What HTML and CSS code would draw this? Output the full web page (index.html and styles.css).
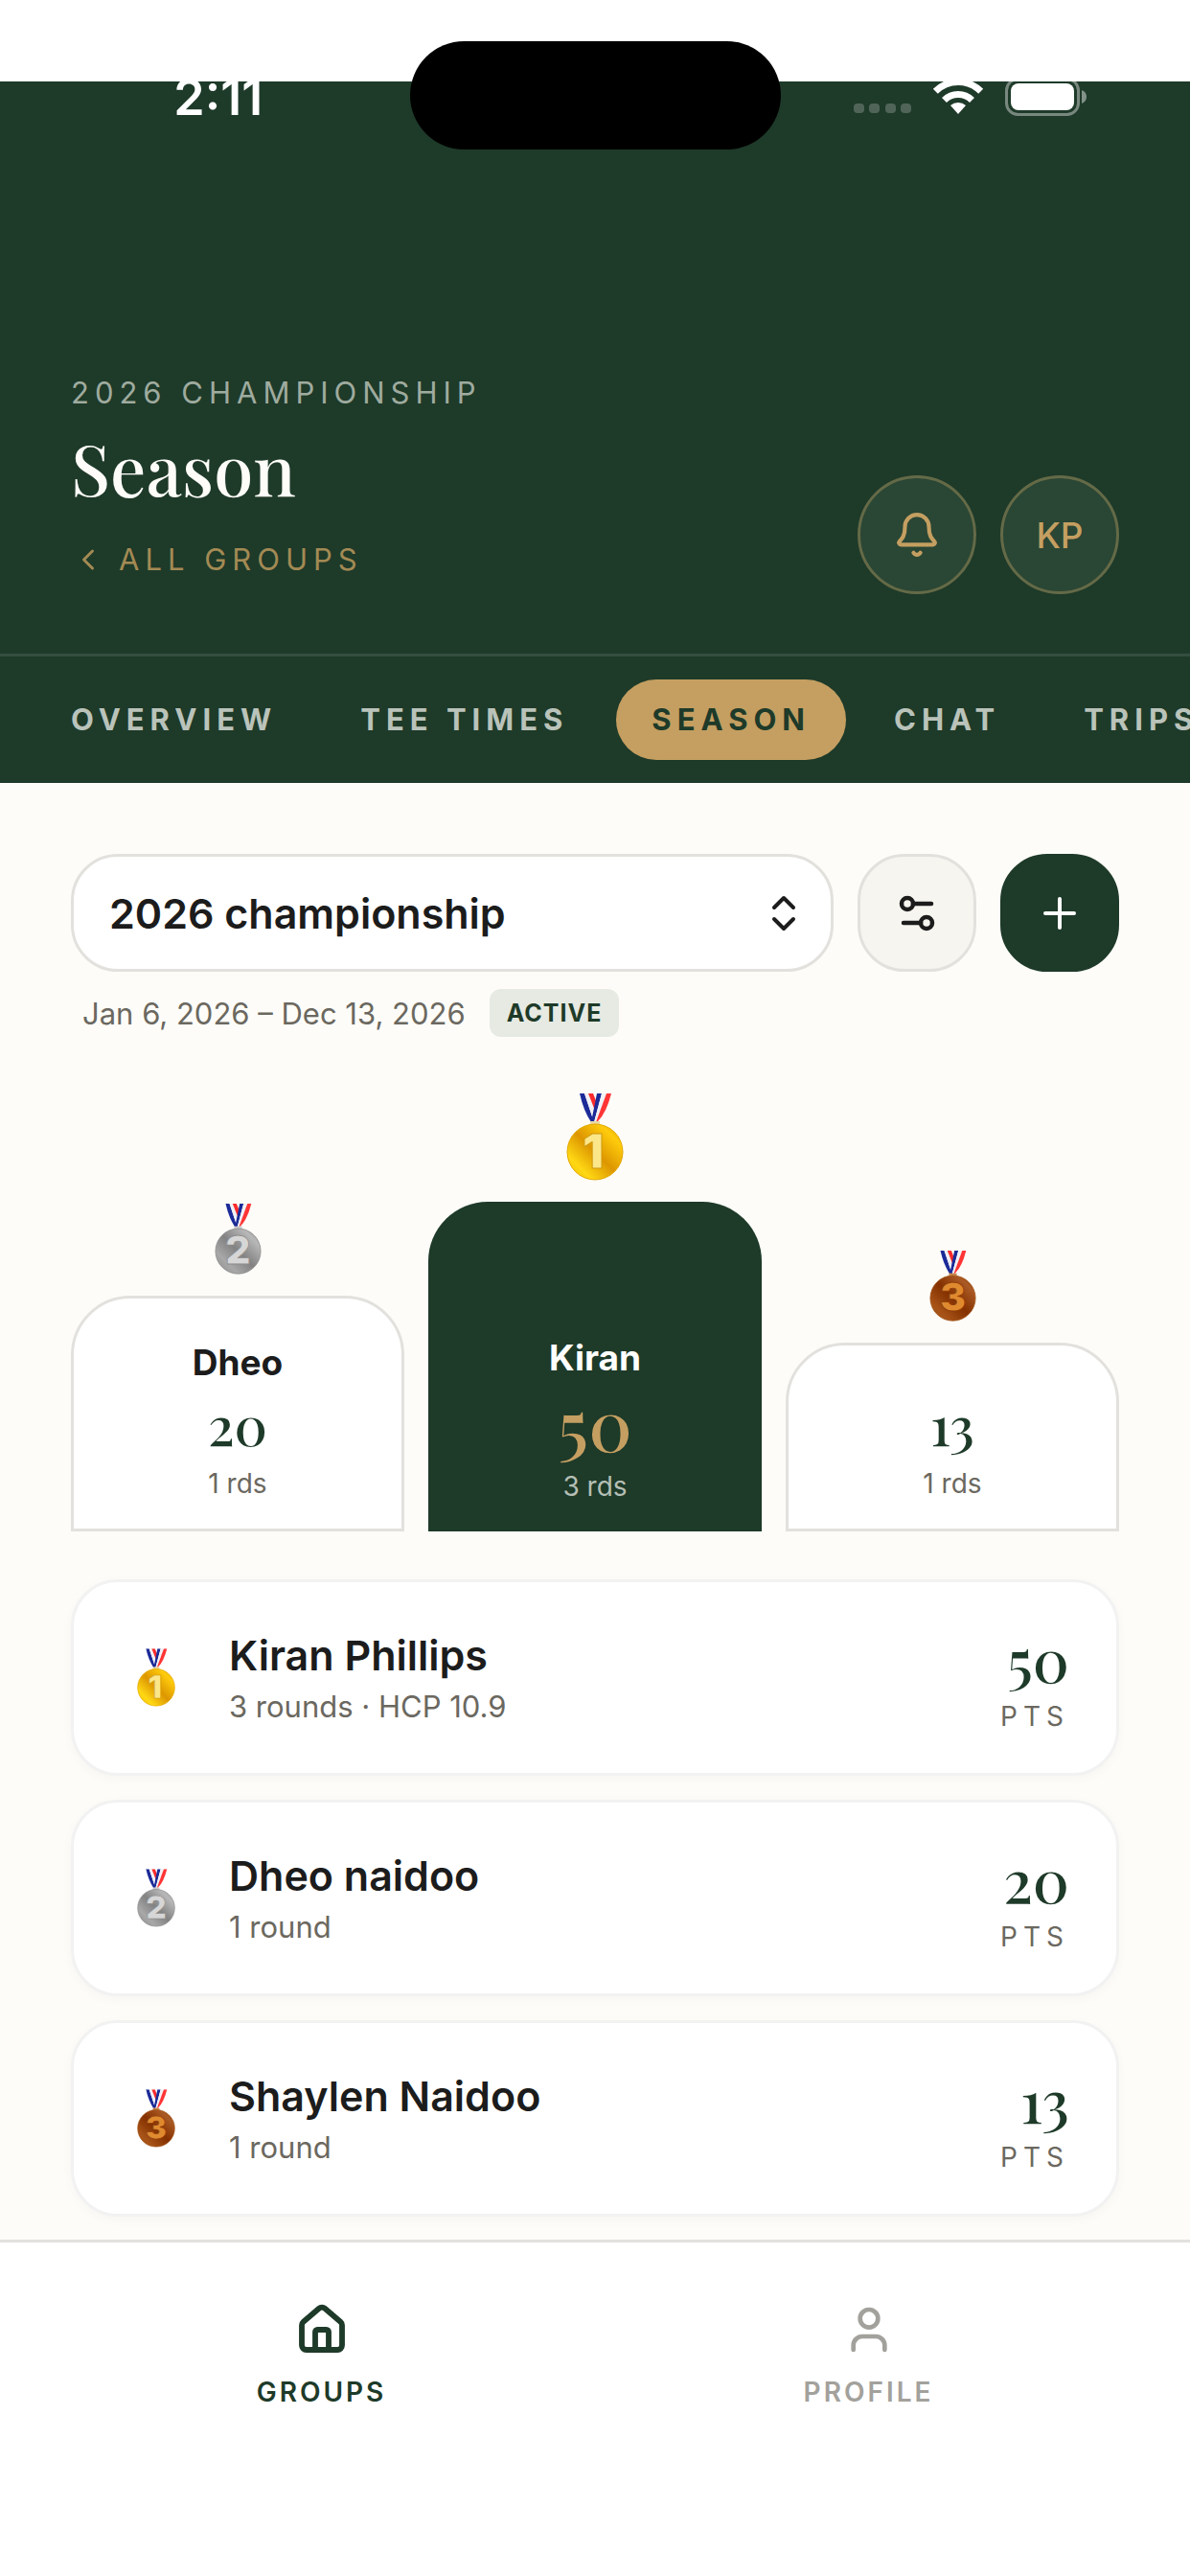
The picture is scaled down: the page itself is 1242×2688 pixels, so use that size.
FILE: index.html
```
<!DOCTYPE html>
<html lang="en">
<head>
    <meta charset="UTF-8">
    <meta name="viewport" content="width=device-width, initial-scale=1.0">
    <title>Season</title>
    <link rel="stylesheet" href="styles.css">
</head>
<body>
    <!-- shared medal artwork -->
    <svg class="sprite" width="0" height="0" aria-hidden="true">
        <defs>
            <linearGradient id="gold" x1="0" y1="1" x2="1" y2="0">
                <stop offset="0" stop-color="#f0b800"/>
                <stop offset="0.22" stop-color="#ffd814"/>
                <stop offset="0.5" stop-color="#dd9600"/>
                <stop offset="0.8" stop-color="#ffcc0c"/>
                <stop offset="1" stop-color="#d99400"/>
            </linearGradient>
            <linearGradient id="silver" x1="0" y1="1" x2="1" y2="0">
                <stop offset="0" stop-color="#8a8a8a"/>
                <stop offset="0.25" stop-color="#a8a8a8"/>
                <stop offset="0.5" stop-color="#828282"/>
                <stop offset="0.8" stop-color="#b8b8b8"/>
                <stop offset="1" stop-color="#8c8c8c"/>
            </linearGradient>
            <linearGradient id="bronze" x1="0" y1="1" x2="1" y2="0">
                <stop offset="0" stop-color="#9a4a10"/>
                <stop offset="0.2" stop-color="#a85418"/>
                <stop offset="0.5" stop-color="#843000"/>
                <stop offset="0.8" stop-color="#aa5a24"/>
                <stop offset="1" stop-color="#8c3a06"/>
            </linearGradient>
        </defs>
        <symbol id="ribbon" viewBox="0 0 60 91">
            <path d="M14 0h5l10 30h-3Q18 18 14 0z" fill="#1c2b98"/>
            <path d="M19 0h4l8 24-2 6z" fill="#f1f1f6"/>
            <path d="M23 0h5l4 10-2 8z" fill="#fb2b2b"/>
            <path d="M32 0h5l-8 30h-3z" fill="#1c2b98"/>
            <path d="M37 0h5l-9 27-4 3z" fill="#f1f1f6"/>
            <path d="M42 0h5Q42 20 33 29l-2 1z" fill="#ff3535"/>
        </symbol>
        <symbol id="medal-gold" viewBox="0 0 60 91">
            <use href="#ribbon"/>
            <rect x="25" y="29" width="10" height="4" fill="#e9d9a0"/>
            <circle cx="30" cy="61" r="29" fill="url(#gold)" stroke="#e3a800"/>
        </symbol>
        <symbol id="medal-silver" viewBox="0 0 60 91">
            <use href="#ribbon"/>
            <rect x="25" y="29" width="10" height="4" fill="#c9c9c9"/>
            <circle cx="30" cy="61" r="29" fill="url(#silver)" stroke="#8e8e8e"/>
        </symbol>
        <symbol id="medal-bronze" viewBox="0 0 60 91">
            <use href="#ribbon"/>
            <rect x="25" y="29" width="10" height="4" fill="#c98a50"/>
            <circle cx="30" cy="61" r="29" fill="url(#bronze)" stroke="#a4561b"/>
        </symbol>
    </svg>

    <div class="status-bar">
        <span class="status-time">2:11</span>
        <span class="island"></span>
        <span class="status-icons">
            <svg width="60" height="38" viewBox="0 0 60 38" fill="#fff" opacity="0.22">
                <rect x="0" y="26" width="11" height="10" rx="4"/>
                <rect x="16" y="26" width="11" height="10" rx="4"/>
                <rect x="33" y="26" width="11" height="10" rx="4"/>
                <rect x="49" y="26" width="11" height="10" rx="4"/>
            </svg>
            <svg width="54" height="38" viewBox="0 0 54 38" fill="none" stroke="#fff">
                <path d="M3.3 13.3a33.5 33.5 0 0 1 47.4 0" stroke-width="7"/>
                <path d="M12.5 22.5a20.5 20.5 0 0 1 29 0" stroke-width="7"/>
                <path d="M27 37l-8-9a12 12 0 0 1 16 0z" fill="#fff" stroke="none"/>
            </svg>
            <svg width="86" height="40" viewBox="0 0 86 40">
                <rect x="1.5" y="1.5" width="75" height="37" rx="12" fill="none" stroke="#fff" stroke-width="3" opacity="0.4"/>
                <rect x="6" y="6" width="66" height="28" rx="8" fill="#fff"/>
                <path d="M80 13q5 2 5 7t-5 7z" fill="#fff" opacity="0.45"/>
            </svg>
        </span>
    </div>

    <header class="header">
        <div class="header-title">
            <p class="eyebrow">2026 CHAMPIONSHIP</p>
            <h1>Season</h1>
            <a class="back-link" href="#">
                <svg class="icon" width="36" height="36" viewBox="0 0 24 24"><path d="m15 18-6-6 6-6"/></svg>
                ALL GROUPS
            </a>
        </div>
        <div class="header-actions">
            <button class="round-btn" aria-label="Notifications">
                <svg class="icon" width="50" height="50" viewBox="0 0 24 24">
                    <path d="M10.268 21a2 2 0 0 0 3.464 0"/>
                    <path d="M3.262 15.326A1 1 0 0 0 4 17h16a1 1 0 0 0 .74-1.673C19.41 13.956 18 12.499 18 8A6 6 0 0 0 6 8c0 4.499-1.411 5.956-2.738 7.326"/>
                </svg>
            </button>
            <button class="round-btn">KP</button>
        </div>
    </header>

    <nav class="tabs">
        <a class="tab" href="#">OVERVIEW</a>
        <a class="tab" href="#">TEE TIMES</a>
        <a class="tab active" href="#">SEASON</a>
        <a class="tab" href="#">CHAT</a>
        <a class="tab" href="#">TRIPS</a>
    </nav>

    <main class="content">
        <div class="controls">
            <div class="season-select">
                <select aria-label="Season">
                    <option>2026 championship</option>
                </select>
                <svg class="icon" width="48" height="48" viewBox="0 0 24 24"><path d="m7 15 5 5 5-5"/><path d="m7 9 5-5 5 5"/></svg>
            </div>
            <button class="square-btn" aria-label="Season settings">
                <svg width="38" height="38" viewBox="0 0 38 38" fill="none" stroke="currentColor" stroke-width="4.5" stroke-linecap="round">
                    <circle cx="9" cy="9" r="6"/>
                    <path d="M15 9h19"/>
                    <circle cx="29" cy="29" r="6"/>
                    <path d="M23 29H5"/>
                </svg>
            </button>
            <button class="square-btn primary" aria-label="Add">
                <svg width="34" height="34" viewBox="0 0 34 34" fill="none" stroke="currentColor" stroke-width="4" stroke-linecap="round"><path d="M17 2v30M2 17h30"/></svg>
            </button>
        </div>

        <div class="season-meta">
            <span>Jan 6, 2026 – Dec 13, 2026</span>
            <span class="badge">ACTIVE</span>
        </div>

        <section class="podium">
            <div class="place second">
                <svg class="medal silver" viewBox="0 0 60 91"><use href="#medal-silver"/><text x="30" y="78">2</text></svg>
                <div class="block">
                    <p class="block-name">Dheo</p>
                    <p class="block-score">20</p>
                    <p class="block-rounds">1 rds</p>
                </div>
            </div>
            <div class="place first">
                <svg class="medal gold" viewBox="0 0 60 91"><use href="#medal-gold"/><text x="28" y="78">1</text></svg>
                <div class="block">
                    <p class="block-name">Kiran</p>
                    <p class="block-score">50</p>
                    <p class="block-rounds">3 rds</p>
                </div>
            </div>
            <div class="place third">
                <svg class="medal bronze" viewBox="0 0 60 91"><use href="#medal-bronze"/><text x="30" y="78">3</text></svg>
                <div class="block">
                    <p class="block-score">13</p>
                    <p class="block-rounds">1 rds</p>
                </div>
            </div>
        </section>

        <ol class="leaderboard">
            <li class="player">
                <svg class="medal gold" viewBox="0 0 60 91"><use href="#medal-gold"/><text x="28" y="78">1</text></svg>
                <div class="player-info">
                    <h2>Kiran Phillips</h2>
                    <p>3 rounds · HCP 10.9</p>
                </div>
                <div class="points">
                    <strong>50</strong>
                    <span>PTS</span>
                </div>
            </li>
            <li class="player">
                <svg class="medal silver" viewBox="0 0 60 91"><use href="#medal-silver"/><text x="30" y="78">2</text></svg>
                <div class="player-info">
                    <h2>Dheo naidoo</h2>
                    <p>1 round</p>
                </div>
                <div class="points">
                    <strong>20</strong>
                    <span>PTS</span>
                </div>
            </li>
            <li class="player">
                <svg class="medal bronze" viewBox="0 0 60 91"><use href="#medal-bronze"/><text x="30" y="78">3</text></svg>
                <div class="player-info">
                    <h2>Shaylen Naidoo</h2>
                    <p>1 round</p>
                </div>
                <div class="points">
                    <strong>13</strong>
                    <span>PTS</span>
                </div>
            </li>
        </ol>
    </main>

    <nav class="bottom-nav">
        <a class="nav-item active" href="#">
            <svg class="icon" width="56" height="56" viewBox="0 0 24 24">
                <path d="M15 21v-8a1 1 0 0 0-1-1h-4a1 1 0 0 0-1 1v8"/>
                <path d="M3 10a2 2 0 0 1 .709-1.528l7-5.999a2 2 0 0 1 2.582 0l7 5.999A2 2 0 0 1 21 10v9a2 2 0 0 1-2 2H5a2 2 0 0 1-2-2z"/>
            </svg>
            GROUPS
        </a>
        <a class="nav-item" href="#">
            <svg class="icon" width="56" height="56" viewBox="0 0 24 24">
                <path d="M19 21v-2a4 4 0 0 0-4-4H9a4 4 0 0 0-4 4v2"/>
                <circle cx="12" cy="7" r="4"/>
            </svg>
            PROFILE
        </a>
    </nav>
</body>
</html>
```

FILE: styles.css
```
:root {
    --green: #1e3a29;
    --gold: #c49f61;
    --cream: #fdfcf8;
    --ink: #1c1c1c;
    --muted: #6b6860;
    --line: #e2e1dd;
    --serif: "Playfair Display", "Liberation Serif", serif;
}
* {
    box-sizing: border-box;
}
body {
    font-family: Inter, sans-serif;
    background-color: white;
    color: var(--ink);
    margin: 0;
    min-height: 100vh;
    display: flex;
    flex-direction: column;
    overflow-x: hidden;
}
h1, h2, p, ol {
    margin: 0;
    padding: 0;
}
a {
    text-decoration: none;
}
button, select {
    font-family: inherit;
    cursor: pointer;
}
svg {
    flex-shrink: 0;
}
.sprite {
    position: absolute;
}
.icon {
    fill: none;
    stroke: currentColor;
    stroke-width: 2;
    stroke-linecap: round;
    stroke-linejoin: round;
}

/* medals */
.medal text {
    font-size: 50px;
    font-weight: 900;
    text-anchor: middle;
}
.gold text {
    fill: #fbe689;
    stroke: #cf9a10;
}
.silver text {
    fill: #d6d6d6;
    stroke: #8d8d8d;
}
.bronze text {
    fill: #e08a30;
    stroke: #8e3d08;
}

/* status bar */
.status-bar {
    display: grid;
    grid-template-columns: 1fr 387px 1fr;
    align-items: center;
    justify-items: center;
    padding-top: 43px;
    color: white;
    background: linear-gradient(white 85px, var(--green) 85px);
}
.status-time {
    font-size: 52px;
    font-weight: 600;
    padding: 3px 0 0 28px;
}
.island {
    width: 100%;
    height: 113px;
    border-radius: 57px;
    background-color: black;
}
.status-icons {
    display: flex;
    align-items: center;
    gap: 22px;
    padding: 3px 30px 0 0;
}

/* header */
.header {
    display: flex;
    justify-content: space-between;
    align-items: flex-end;
    padding: 234px 74px 62px;
    background-color: var(--green);
}
.eyebrow {
    font-size: 31px;
    line-height: 40px;
    letter-spacing: 6px;
    color: #9fab9f;
    margin-bottom: 8px;
}
.header h1 {
    font-family: var(--serif);
    font-size: 74px;
    line-height: 100px;
    font-weight: 500;
    color: var(--cream);
}
.back-link {
    display: flex;
    align-items: center;
    gap: 14px;
    padding: 26px 0 16px;
    font-size: 31px;
    line-height: 40px;
    letter-spacing: 6px;
    color: #a38a54;
}
.header-actions {
    display: flex;
    gap: 25px;
}
.round-btn {
    display: flex;
    align-items: center;
    justify-content: center;
    width: 124px;
    height: 124px;
    border: 3px solid #646a47;
    border-radius: 50%;
    background-color: #2a4634;
    color: var(--gold);
    font-size: 37px;
    font-weight: 500;
    padding: 0;
}

/* section tabs */
.tabs {
    display: flex;
    gap: 13px;
    padding: 24px 37px;
    border-top: 3px solid #354e3f;
    background-color: var(--green);
    overflow: hidden;
}
.tab {
    padding: 0 37px;
    border-radius: 42px;
    font-size: 31px;
    line-height: 84px;
    font-weight: 700;
    letter-spacing: 6px;
    white-space: nowrap;
    color: #bac3ba;
}
.tab.active {
    background-color: var(--gold);
    color: var(--green);
}

/* content */
.content {
    flex: 1;
    padding: 74px 74px 20px;
    background-color: var(--cream);
}
.controls {
    display: flex;
    gap: 25px;
}
.season-select {
    display: grid;
    flex: 1;
    align-items: center;
}
.season-select select {
    grid-area: 1 / 1;
    appearance: none;
    width: 100%;
    height: 123px;
    padding: 0 90px 0 37px;
    border: 3px solid var(--line);
    border-radius: 49px;
    background-color: white;
    color: var(--ink);
    font-size: 43px;
    font-weight: 600;
}
.season-select .icon {
    grid-area: 1 / 1;
    justify-self: end;
    margin-right: 28px;
    pointer-events: none;
}
.square-btn {
    display: flex;
    align-items: center;
    justify-content: center;
    width: 124px;
    height: 123px;
    padding: 0;
    border: 3px solid var(--line);
    border-radius: 49px;
    background-color: #f7f5ef;
    color: var(--ink);
}
.square-btn.primary {
    border-color: var(--green);
    background-color: var(--green);
    color: white;
}
.season-meta {
    display: flex;
    align-items: center;
    gap: 25px;
    margin-top: 18px;
    padding-left: 12px;
    font-size: 31px;
    color: var(--muted);
}
.badge {
    padding: 0 18px;
    border-radius: 12px;
    background-color: #e6eae3;
    color: var(--green);
    font-size: 25px;
    line-height: 50px;
    font-weight: 700;
    letter-spacing: 1px;
}

/* podium */
.podium {
    display: grid;
    grid-template-columns: repeat(3, 1fr);
    align-items: end;
    gap: 25px;
    margin-top: 59px;
}
.place {
    display: flex;
    flex-direction: column;
    align-items: center;
    gap: 22px;
    text-align: center;
}
.place .medal {
    width: 49px;
    height: 74px;
}
.block {
    display: flex;
    flex-direction: column;
    justify-content: flex-end;
    width: 100%;
    padding-bottom: 29px;
    border: 3px solid var(--line);
    border-radius: 62px 62px 0 0;
    background-color: white;
}
.second .block {
    min-height: 246px;
}
.third .block {
    min-height: 197px;
}
.block-name {
    font-size: 37px;
    line-height: 45px;
    font-weight: 700;
    margin-bottom: 10px;
}
.block-score {
    font-family: var(--serif);
    font-size: 56px;
    line-height: 64px;
    font-weight: 500;
    color: var(--green);
    margin-bottom: 12px;
}
.block-rounds {
    font-size: 28px;
    line-height: 36px;
    color: var(--muted);
}
.first .medal {
    width: 60px;
    height: 91px;
}
.first .block {
    min-height: 344px;
    border: none;
    background-color: var(--green);
}
.first .block-name {
    color: white;
}
.first .block-score {
    font-size: 74px;
    line-height: 72px;
    color: var(--gold);
}
.first .block-rounds {
    color: #b5bfb5;
}

/* leaderboard */
.leaderboard {
    display: flex;
    flex-direction: column;
    gap: 25px;
    margin-top: 50px;
    list-style: none;
}
.player {
    display: flex;
    align-items: center;
    gap: 56px;
    padding: 49px 49px 49px 66px;
    border: 3px solid #f2f2f2;
    border-radius: 49px;
    background-color: white;
    box-shadow: 0 3px 12px rgba(0,0,0,0.03);
}
.player .medal {
    width: 40px;
    height: 61px;
}
.player-info {
    flex: 1;
}
.player-info h2 {
    font-size: 43px;
    line-height: 54px;
    font-weight: 600;
    margin-bottom: 7px;
}
.player-info p {
    font-size: 31px;
    line-height: 40px;
    color: var(--muted);
}
.points {
    display: flex;
    flex-direction: column;
    align-items: flex-end;
    margin-bottom: -10px;
}
.points strong {
    font-family: var(--serif);
    font-size: 62px;
    line-height: 62px;
    font-weight: 500;
    color: var(--green);
    margin-bottom: 9px;
}
.points span {
    font-size: 28px;
    line-height: 40px;
    letter-spacing: 6px;
    color: var(--muted);
}

/* bottom navigation */
.bottom-nav {
    display: flex;
    padding: 63px 50px 172px;
    border-top: 3px solid var(--line);
    background-color: white;
}
.nav-item {
    flex: 1;
    display: flex;
    flex-direction: column;
    align-items: center;
    gap: 17px;
    font-size: 28px;
    line-height: 40px;
    font-weight: 600;
    letter-spacing: 3px;
    color: #a3a19c;
}
.nav-item.active {
    color: var(--green);
}
.nav-item.active .icon {
    stroke-width: 2.5;
}
```
